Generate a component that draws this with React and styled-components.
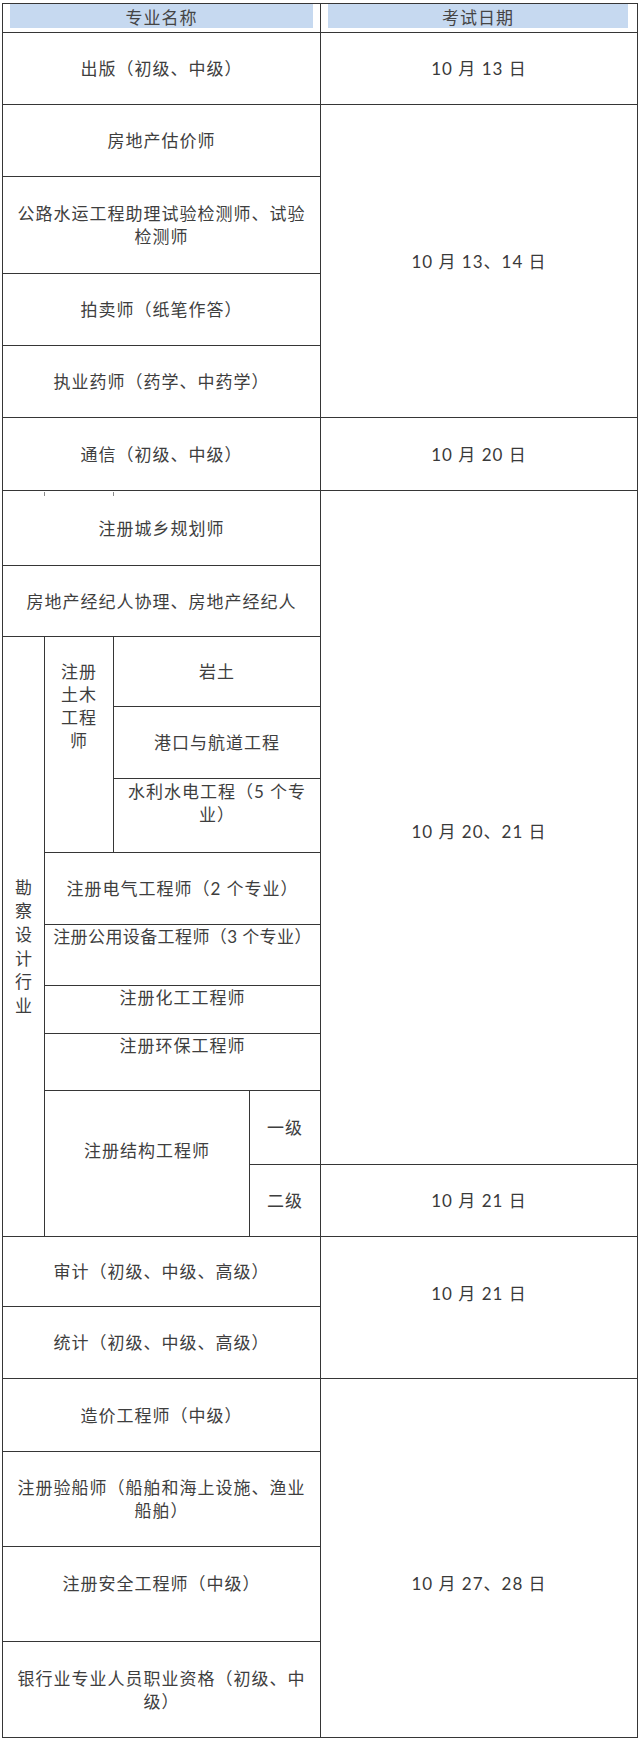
import React from "react";
import styled, { createGlobalStyle } from "styled-components";

const Global = createGlobalStyle`
  html, body { margin: 0; padding: 0; background: #ffffff; }
  body { font-family: "Lato", "Noto Sans CJK SC", sans-serif; }
`;

const Page = styled.div`
  width: 640px;
  min-height: 1743px;
  padding: 3px 0 0 2px;
  box-sizing: border-box;
  background: #ffffff;
`;

const Table = styled.div`
  display: grid;
  width: 636px;
  box-sizing: border-box;
  padding: 1px;
  gap: 1px;
  background: #363636;
  grid-template-columns: 41px 68px 135px 70px 316px;
  grid-template-rows:
    28px 71px 71px 96px 71px 71px 72px 74px 70px 69px 71px 73px
    71px 60px 47px 56px 73px 71px 69px 71px 72px 94px 94px 95px;
`;

const HeadCell = styled.div`
  grid-column: ${(p) => p.$col};
  grid-row: 1;
  background: #ffffff;
  display: flex;
  padding: 0 ${(p) => p.$pr}px 4px ${(p) => p.$pl}px;
`;

const HeadBar = styled.div`
  flex: 1;
  background: #c6d9f0;
  display: flex;
  align-items: center;
  justify-content: center;
  font-family: "Noto Sans CJK SC", sans-serif;
  font-size: 17px;
  letter-spacing: 1px;
  color: #454545;
  line-height: 23px;
`;

const Cell = styled.div`
  grid-column: ${(p) => p.$col};
  grid-row: ${(p) => p.$row};
  position: relative;
  background: #ffffff;
  display: flex;
  flex-direction: column;
  align-items: center;
  justify-content: ${(p) => (p.$top ? "flex-start" : "center")};
  padding: ${(p) => p.$pt || 0}px 2px ${(p) => p.$pb || 0}px;
  box-sizing: border-box;
  text-align: center;
  font-size: 17px;
  letter-spacing: ${(p) => (p.$tight ? "0.4px" : "1px")};
  line-height: 23px;
  color: #3e3e3e;
  white-space: nowrap;
`;

const DateText = styled.span`
  font-size: 17px;
  letter-spacing: 1px;
  color: #3a3a3a;
`;

const Vertical = styled.span`
  display: block;
  width: 1em;
  white-space: normal;
  word-break: break-all;
  line-height: 23.6px;
  letter-spacing: 2px;
`;

const Tick = styled.span`
  position: absolute;
  top: 1px;
  left: ${(p) => p.$x}px;
  width: 1px;
  height: 4px;
  background: #8a8a8a;
`;

export default function App() {
  const names = [
    { col: "1 / 5", row: "2", text: "出版（初级、中级）" },
    { col: "1 / 5", row: "3", text: "房地产估价师" },
    { col: "1 / 5", row: "4", text: <>公路水运工程助理试验检测师、试验<br />检测师</> },
    { col: "1 / 5", row: "5", text: "拍卖师（纸笔作答）" },
    { col: "1 / 5", row: "6", text: "执业药师（药学、中药学）" },
    { col: "1 / 5", row: "7", text: "通信（初级、中级）" },
    { col: "1 / 5", row: "9", text: "房地产经纪人协理、房地产经纪人" },
    { col: "3 / 5", row: "10", text: "岩土" },
    { col: "3 / 5", row: "11", text: "港口与航道工程" },
    { col: "3 / 5", row: "12", text: <>水利水电工程（5 个专<br />业）</>, top: true, pt: 1 },
    { col: "2 / 5", row: "13", text: "注册电气工程师（2 个专业）" },
    { col: "2 / 5", row: "14", text: "注册公用设备工程师（3 个专业）", top: true, tight: true },
    { col: "2 / 5", row: "15", text: "注册化工工程师", top: true },
    { col: "2 / 5", row: "16", text: "注册环保工程师", top: true },
    { col: "2 / 4", row: "17 / 19", text: "注册结构工程师", pb: 26 },
    { col: "4", row: "17", text: "一级" },
    { col: "4", row: "18", text: "二级" },
    { col: "1 / 5", row: "19", text: "审计（初级、中级、高级）" },
    { col: "1 / 5", row: "20", text: "统计（初级、中级、高级）" },
    { col: "1 / 5", row: "21", text: "造价工程师（中级）" },
    { col: "1 / 5", row: "22", text: <>注册验船师（船舶和海上设施、渔业<br />船舶）</> },
    { col: "1 / 5", row: "23", text: "注册安全工程师（中级）", pb: 22 },
    { col: "1 / 5", row: "24", text: <>银行业专业人员职业资格（初级、中<br />级）</> },
  ];

  const dates = [
    { row: "2", text: "10 月 13 日" },
    { row: "3 / 7", text: "10 月 13、14 日" },
    { row: "7", text: "10 月 20 日" },
    { row: "8 / 18", text: "10 月 20、21 日", pt: 8 },
    { row: "18", text: "10 月 21 日" },
    { row: "19 / 21", text: "10 月 21 日", pb: 28 },
    { row: "21 / 25", text: "10 月 27、28 日", pt: 50 },
  ];

  return (
    <Page>
      <Global />
      <Table>
        <HeadCell $col="1 / 5" $pl={7} $pr={7}>
          <HeadBar>专业名称</HeadBar>
        </HeadCell>
        <HeadCell $col="5" $pl={7} $pr={9}>
          <HeadBar>考试日期</HeadBar>
        </HeadCell>

        <Cell $col="1 / 5" $row="8">
          <Tick $x={41} />
          <Tick $x={110} />
          注册城乡规划师
        </Cell>

        <Cell $col="1" $row="10 / 19" $pt={20}>
          <Vertical>勘察设计行业</Vertical>
        </Cell>
        <Cell $col="2" $row="10 / 13" $top $pt={23}>
          注册<br />土木<br />工程<br />师
        </Cell>

        {names.map((n, i) => (
          <Cell
            key={i}
            $col={n.col}
            $row={n.row}
            $top={n.top}
            $pt={n.pt}
            $pb={n.pb}
            $tight={n.tight}
          >
            {n.text}
          </Cell>
        ))}

        {dates.map((d, i) => (
          <Cell key={`d${i}`} $col="5" $row={d.row} $pt={d.pt} $pb={d.pb}>
            <DateText>{d.text}</DateText>
          </Cell>
        ))}
      </Table>
    </Page>
  );
}
